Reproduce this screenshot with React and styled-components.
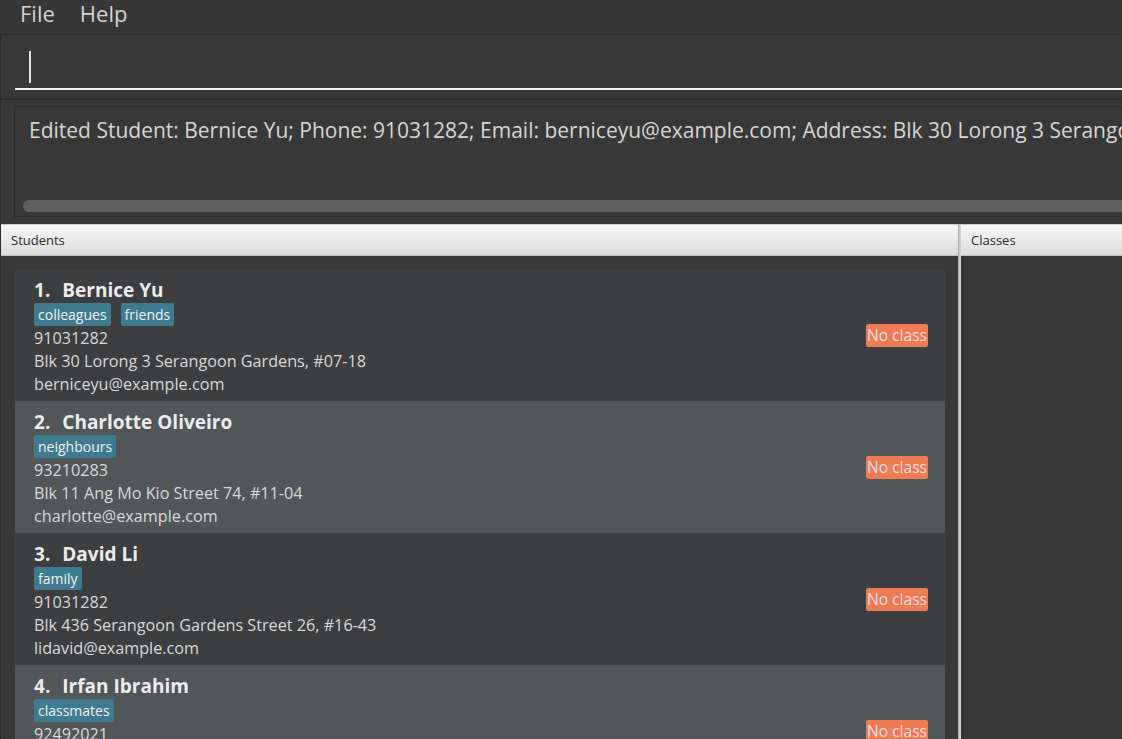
import styled, { createGlobalStyle } from "styled-components";

const GlobalStyle = createGlobalStyle`
  html, body {
    margin: 0;
    padding: 0;
    background: #383838;
    overflow: hidden;
  }
  body {
    font-family: "Open Sans", "Noto Sans", sans-serif;
  }
`;

const Window = styled.div`
  width: 1122px;
  height: 739px;
  display: flex;
  flex-direction: column;
  background: #383838;
  overflow: hidden;
`;

const MenuBar = styled.div`
  height: 35px;
  display: flex;
  align-items: flex-start;
  gap: 25px;
  padding-left: 20px;
  background: #373737;
  border-bottom: 1px solid #2c2c2c;
  box-sizing: border-box;
`;

const MenuItem = styled.span`
  font-size: 22px;
  color: #d4d4d4;
  line-height: 27px;
`;

const CommandBox = styled.div`
  height: 65px;
  padding: 0 0 0 14px;
  border-left: 1px solid #2c2c2c;
  border-bottom: 2px solid #2c2c2c;
  box-sizing: border-box;
  display: flex;
`;

const CommandField = styled.div`
  flex: 1;
  height: 55px;
  border-bottom: 2px solid #f2f2f2;
  display: flex;
  align-items: flex-start;
  padding: 16px 0 0 14px;
  box-sizing: border-box;
`;

const Caret = styled.div`
  width: 2px;
  height: 32px;
  background: #e6e6e6;
`;

const ResultPane = styled.div`
  height: 123px;
  padding: 6px 0 6px 13px;
  box-sizing: border-box;
  border-left: 1px solid #2c2c2c;
`;

const ResultBox = styled.div`
  height: 100%;
  border: 1px solid #2a2a2a;
  border-right: none;
  background: #383838;
  display: flex;
  flex-direction: column;
  justify-content: space-between;
  padding: 9px 0 4px 8px;
  box-sizing: border-box;
  overflow: hidden;
`;

const ResultText = styled.div`
  font-size: 21px;
  color: #d6d6d6;
  white-space: nowrap;
  padding-left: 6px;
`;

const ScrollBar = styled.div`
  height: 12px;
  border-radius: 6px 0 0 6px;
  background: #5f5f5f;
`;

const Panels = styled.div`
  flex: 1;
  display: grid;
  grid-template-columns: 958px 3px 1fr;
  min-height: 0;
  margin-top: 1px;
`;

const Panel = styled.div`
  display: flex;
  flex-direction: column;
  min-height: 0;
  background: #383838;
  border-left: ${(p) => (p.$first ? "1px solid #2c2c2c" : "none")};
`;

const PanelHeader = styled.div`
  height: 32px;
  flex-shrink: 0;
  display: flex;
  align-items: center;
  padding-left: 10px;
  font-size: 13px;
  color: #2a2a2a;
  background: linear-gradient(#f7f7f7, #dcdcdc);
  border-top: 1px solid #c8c8c8;
  border-bottom: 1px solid #bdbdbd;
  box-sizing: border-box;
`;

const Divider = styled.div`
  background: #cfcfcf;
  border-left: 1px solid #a8a8a8;
`;

const List = styled.div`
  padding: 13px 13px 0 14px;
  display: flex;
  flex-direction: column;
`;

const Card = styled.div`
  height: 132px;
  flex-shrink: 0;
  display: flex;
  align-items: center;
  padding: 0 17px 0 19px;
  box-sizing: border-box;
  background: ${(p) => (p.$even ? "#515658" : "#3c3e40")};
  border-radius: ${(p) => (p.$top ? "3px 3px 0 0" : "0")};
`;

const Info = styled.div`
  flex: 1;
  display: flex;
  flex-direction: column;
`;

const Name = styled.div`
  display: flex;
  font-size: 19px;
  font-weight: 700;
  color: #ececec;
  line-height: 26px;
  margin-top: 3px;
  white-space: nowrap;
`;

const Index = styled.span`
  margin-right: 12px;
`;

const Tags = styled.div`
  display: flex;
  gap: 10px;
  margin: 0 0 1px;
`;

const Tag = styled.span`
  background: #3e7b91;
  color: #f2f2f2;
  font-size: 14px;
  line-height: 23px;
  padding: 0 4px;
  border-radius: 2px;
`;

const Detail = styled.div`
  font-size: 16.2px;
  color: #dadada;
  line-height: 23px;
  white-space: nowrap;
`;

const ClassBadge = styled.span`
  background: #ef7b52;
  color: #f6dde8;
  font-size: 15.6px;
  line-height: 23px;
  padding: 0 1px;
  border-radius: 2px;
`;

const students = [
  {
    name: "Bernice Yu",
    tags: ["colleagues", "friends"],
    phone: "91031282",
    address: "Blk 30 Lorong 3 Serangoon Gardens, #07-18",
    email: "berniceyu@example.com",
  },
  {
    name: "Charlotte Oliveiro",
    tags: ["neighbours"],
    phone: "93210283",
    address: "Blk 11 Ang Mo Kio Street 74, #11-04",
    email: "charlotte@example.com",
  },
  {
    name: "David Li",
    tags: ["family"],
    phone: "91031282",
    address: "Blk 436 Serangoon Gardens Street 26, #16-43",
    email: "lidavid@example.com",
  },
  {
    name: "Irfan Ibrahim",
    tags: ["classmates"],
    phone: "92492021",
    address: "Blk 47 Tampines Street 20, #17-35",
    email: "irfan@example.com",
  },
];

export default function App() {
  return (
    <Window>
      <GlobalStyle />
      <MenuBar>
        <MenuItem>File</MenuItem>
        <MenuItem>Help</MenuItem>
      </MenuBar>
      <CommandBox>
        <CommandField>
          <Caret />
        </CommandField>
      </CommandBox>
      <ResultPane>
        <ResultBox>
          <ResultText>
            Edited Student: Bernice Yu; Phone: 91031282; Email: berniceyu@example.com; Address: Blk 30 Lorong 3 Serangoon Gardens, #07-18; Tags: [colleagues][friends]
          </ResultText>
          <ScrollBar />
        </ResultBox>
      </ResultPane>
      <Panels>
        <Panel $first>
          <PanelHeader>Students</PanelHeader>
          <List>
            {students.map((s, i) => (
              <Card key={s.name} $even={i % 2 === 1} $top={i === 0}>
                <Info>
                  <Name>
                    <Index>{i + 1}.</Index>
                    {s.name}
                  </Name>
                  <Tags>
                    {s.tags.map((t) => (
                      <Tag key={t}>{t}</Tag>
                    ))}
                  </Tags>
                  <Detail>{s.phone}</Detail>
                  <Detail>{s.address}</Detail>
                  <Detail>{s.email}</Detail>
                </Info>
                <ClassBadge>No class</ClassBadge>
              </Card>
            ))}
          </List>
        </Panel>
        <Divider />
        <Panel>
          <PanelHeader>Classes</PanelHeader>
        </Panel>
      </Panels>
    </Window>
  );
}
